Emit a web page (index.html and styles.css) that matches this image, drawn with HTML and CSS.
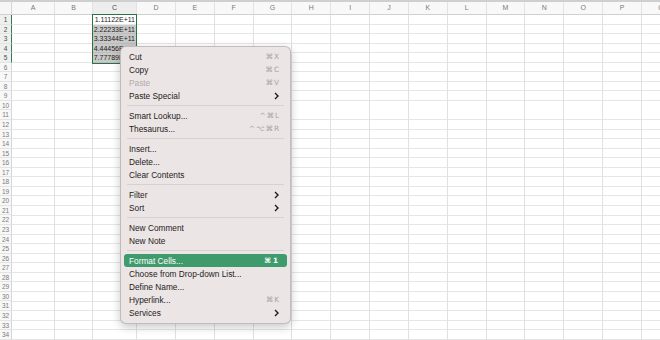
FILE: index.html
```html
<!DOCTYPE html>
<html>
<head>
<meta charset="utf-8">
<link rel="stylesheet" href="styles.css">
</head>
<body>
<div class="topbar"></div>
<div class="sheet">
  <div class="corner"></div>
  <div class="ch">A</div>
  <div class="ch">B</div>
  <div class="ch ch-sel">C</div>
  <div class="ch">D</div>
  <div class="ch">E</div>
  <div class="ch">F</div>
  <div class="ch">G</div>
  <div class="ch">H</div>
  <div class="ch">I</div>
  <div class="ch">J</div>
  <div class="ch">K</div>
  <div class="ch">L</div>
  <div class="ch">M</div>
  <div class="ch">N</div>
  <div class="ch">O</div>
  <div class="ch">P</div>
  <div class="ch">Q</div>

  <div class="rowheads">
    <div class="rh on">1</div><div class="rh on">2</div><div class="rh on">3</div><div class="rh on">4</div><div class="rh on">5</div>
    <div class="rh">6</div><div class="rh">7</div><div class="rh">8</div><div class="rh">9</div><div class="rh">10</div>
    <div class="rh">11</div><div class="rh">12</div><div class="rh">13</div><div class="rh">14</div><div class="rh">15</div>
    <div class="rh">16</div><div class="rh">17</div><div class="rh">18</div><div class="rh">19</div><div class="rh">20</div>
    <div class="rh">21</div><div class="rh">22</div><div class="rh">23</div><div class="rh">24</div><div class="rh">25</div>
    <div class="rh">26</div><div class="rh">27</div><div class="rh">28</div><div class="rh">29</div><div class="rh">30</div>
    <div class="rh">31</div><div class="rh">32</div><div class="rh">33</div><div class="rh">34</div>
  </div>
  <div class="col"></div>
  <div class="col"></div>
  <div class="col">
    <div class="range">
      <div class="cell active">1.11122E+11</div>
      <div class="cell">2.22233E+11</div>
      <div class="cell">3.33344E+11</div>
      <div class="cell">4.44456E+11</div>
      <div class="cell">7.77789E+11</div>
    </div>
  </div>
  <div class="col"></div>
  <div class="col"></div>
  <div class="col"></div>
  <div class="col"></div>
  <div class="col"></div>
  <div class="col"></div>
  <div class="col"></div>
  <div class="col"></div>
  <div class="col"></div>
  <div class="col"></div>
  <div class="col"></div>
  <div class="col"></div>
  <div class="col"></div>
  <div class="col"></div>
</div>

<div class="menu">
  <div class="item"><span>Cut</span><span class="key">⌘X</span></div>
  <div class="item"><span>Copy</span><span class="key">⌘C</span></div>
  <div class="item disabled"><span>Paste</span><span class="key">⌘V</span></div>
  <div class="item"><span>Paste Special</span><svg class="chev" viewBox="0 0 5 8"><path d="M1 1l3 3-3 3"/></svg></div>
  <div class="sep"></div>
  <div class="item"><span>Smart Lookup...</span><span class="key">^⌘L</span></div>
  <div class="item"><span>Thesaurus...</span><span class="key">^⌥⌘R</span></div>
  <div class="sep"></div>
  <div class="item"><span>Insert...</span></div>
  <div class="item"><span>Delete...</span></div>
  <div class="item"><span>Clear Contents</span></div>
  <div class="sep"></div>
  <div class="item"><span>Filter</span><svg class="chev" viewBox="0 0 5 8"><path d="M1 1l3 3-3 3"/></svg></div>
  <div class="item"><span>Sort</span><svg class="chev" viewBox="0 0 5 8"><path d="M1 1l3 3-3 3"/></svg></div>
  <div class="sep"></div>
  <div class="item"><span>New Comment</span></div>
  <div class="item"><span>New Note</span></div>
  <div class="sep"></div>
  <div class="item hot"><span>Format Cells...</span><span class="key">⌘1</span></div>
  <div class="item"><span>Choose from Drop-down List...</span></div>
  <div class="item"><span>Define Name...</span></div>
  <div class="item"><span>Hyperlink...</span><span class="key">⌘K</span></div>
  <div class="item"><span>Services</span><svg class="chev" viewBox="0 0 5 8"><path d="M1 1l3 3-3 3"/></svg></div>
</div>
</body>
</html>
```

FILE: styles.css
```css
html, body {
  margin: 0;
  padding: 0;
  background: #ffffff;
  width: 660px;
  height: 340px;
  overflow: hidden;
  font-family: "Liberation Sans", Arial, sans-serif;
}

.topbar {
  height: 2px;
  background: #cfcfcf;
}

.sheet {
  display: grid;
  grid-template-columns: 12px 43px 38px 44px repeat(14, 38.85px);
  grid-template-rows: 13px 330px;
  width: 660px;
  overflow: hidden;
}

.corner {
  background: #f6f6f6;
  border-right: 1px solid #d6d6d6;
  border-bottom: 1px solid #d0d0d0;
}

.ch {
  box-sizing: border-box;
  background: #f8f8f8;
  border-right: 1px solid #e2e2e2;
  border-bottom: 1px solid #d0d0d0;
  font-size: 7px;
  color: #7a7a7a;
  text-align: center;
  line-height: 12px;
}

.ch-sel {
  background: #ededed;
  border-bottom: 1px solid #2f7d52;
  color: #4b4b4b;
}

.rowheads {
  display: flex;
  flex-direction: column;
  background: #f8f8f8;
}

.rh {
  box-sizing: border-box;
  height: 9.55px;
  flex: none;
  border-bottom: 1px solid #e4e4e4;
  border-right: 1px solid #d6d6d6;
  font-size: 6.5px;
  line-height: 9px;
  color: #7a7a7a;
  text-align: center;
}

.rh.on {
  background: #efefef;
  border-right: 1.5px solid #2f7d52;
  color: #4b4b4b;
}

.col {
  box-sizing: border-box;
  border-right: 1px solid #e0e0e0;
  background: repeating-linear-gradient(180deg, #ffffff 0, #ffffff 8.55px, #e6e6e6 8.55px, #e6e6e6 9.55px);
}

.range {
  outline: 1.5px solid #2a7349;
  outline-offset: -0.5px;
}

.cell {
  height: 9.55px;
  box-sizing: border-box;
  background: #c9c9c9;
  border-bottom: 1px solid #bdbdbd;
  font-size: 7px;
  line-height: 9px;
  color: #222;
  text-align: right;
  padding-right: 1px;
  white-space: nowrap;
}

.cell.active {
  background: #ffffff;
  border-bottom: 1px solid #e6e6e6;
}

.menu {
  position: absolute;
  left: 120px;
  top: 46px;
  width: 171px;
  box-sizing: border-box;
  padding: 3px 3px 4px 3px;
  background: #ece5e5;
  border-radius: 6px;
  border: 0.5px solid rgba(0, 0, 0, 0.18);
  box-shadow: 0 3px 10px rgba(0, 0, 0, 0.22);
  font-size: 8.3px;
  color: #1f1b1b;
}

.item {
  display: flex;
  align-items: center;
  justify-content: space-between;
  height: 13px;
  padding: 0 7px 0 5px;
  border-radius: 3px;
  white-space: nowrap;
}

.item.disabled {
  color: #b3abab;
}

.key {
  color: #a8a1a1;
  font-family: "DejaVu Sans", "Liberation Sans", sans-serif;
  font-size: 7.3px;
  letter-spacing: 1px;
}

.item.hot {
  background: #3f9a6c;
  color: #ffffff;
}

.item.hot .key {
  color: #ffffff;
  font-weight: bold;
  letter-spacing: 2px;
}

.chev {
  width: 5px;
  height: 8px;
  margin-right: 1px;
}

.chev path {
  fill: none;
  stroke: #1f1b1b;
  stroke-width: 1.4;
}

.sep {
  height: 7px;
  margin: 0 3px;
  background: linear-gradient(180deg, transparent 0, transparent 3px, #d9d1d1 3px, #d9d1d1 4px, transparent 4px);
}
```
